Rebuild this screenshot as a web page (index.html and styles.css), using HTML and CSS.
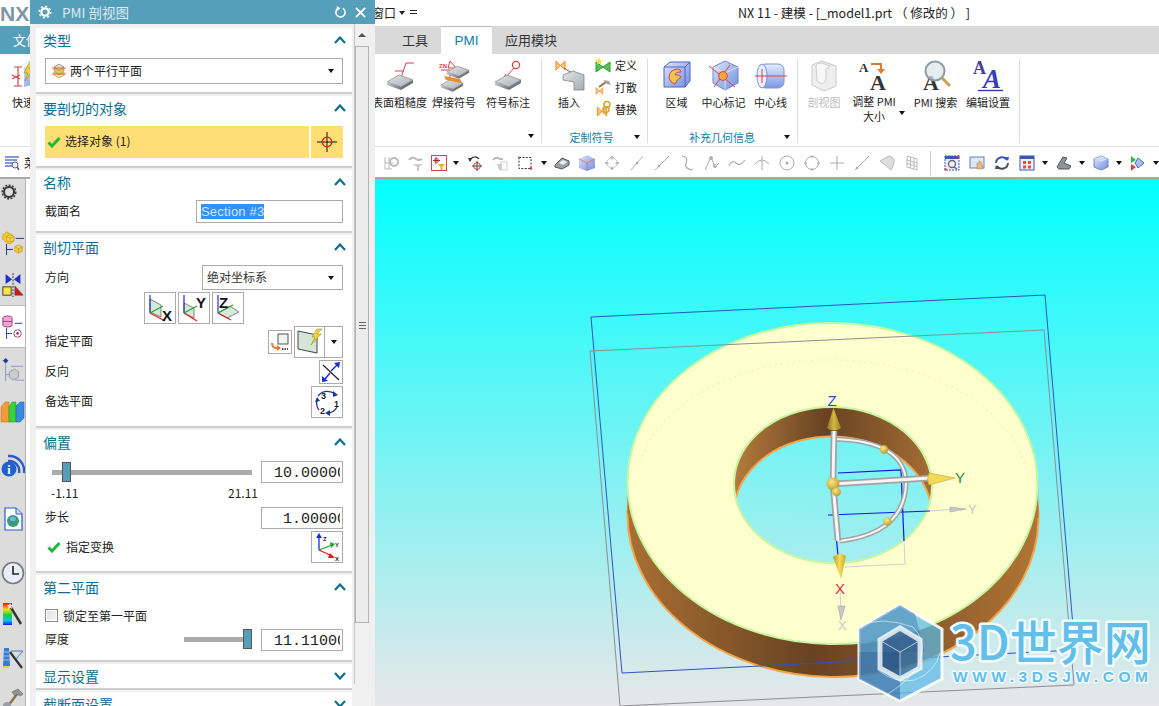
FILE: index.html
```html
<!DOCTYPE html>
<html lang="zh">
<head>
<meta charset="utf-8">
<title>NX 11 - 建模</title>
<link rel="stylesheet" href="styles.css">
</head>
<body>
<svg class="defs" aria-hidden="true">
  <defs>
    <linearGradient id="slab" x1="0" y1="0" x2="1" y2="1"><stop offset="0" stop-color="#e4e6e8"/><stop offset="1" stop-color="#a8adb2"/></linearGradient>
    <linearGradient id="slabside" x1="0" y1="0" x2="1" y2="0"><stop offset="0" stop-color="#c5c9cd"/><stop offset="1" stop-color="#70767c"/></linearGradient>
    <linearGradient id="cubeblue" x1="0" y1="0" x2="1" y2="1"><stop offset="0" stop-color="#dfe6fb"/><stop offset="1" stop-color="#6f8ee0"/></linearGradient>
    <linearGradient id="cyl" x1="0" y1="0" x2="0" y2="1"><stop offset="0" stop-color="#e6ecfd"/><stop offset="1" stop-color="#7b97e6"/></linearGradient>
    <linearGradient id="bgrad" gradientUnits="userSpaceOnUse" x1="0" y1="179" x2="0" y2="706"><stop offset="0" stop-color="#00ffff"/><stop offset="1" stop-color="#e7e7e9"/></linearGradient>
    <linearGradient id="wall" gradientUnits="userSpaceOnUse" x1="628" y1="0" x2="1038" y2="0"><stop offset="0" stop-color="#a96f33"/><stop offset=".46" stop-color="#684222"/><stop offset="1" stop-color="#b07435"/></linearGradient>
    <linearGradient id="wallin" gradientUnits="userSpaceOnUse" x1="733" y1="0" x2="932" y2="0"><stop offset="0" stop-color="#b57c3c"/><stop offset=".45" stop-color="#684222"/><stop offset="1" stop-color="#a56d35"/></linearGradient>
    <linearGradient id="cone" x1="0" y1="0" x2="1" y2="0"><stop offset="0" stop-color="#b89c2e"/><stop offset=".5" stop-color="#f6dc54"/><stop offset="1" stop-color="#c4a834"/></linearGradient>
    <linearGradient id="conedark" x1="0" y1="0" x2="1" y2="0"><stop offset="0" stop-color="#8c7426"/><stop offset=".5" stop-color="#d4b844"/><stop offset="1" stop-color="#96802c"/></linearGradient>
    <linearGradient id="rainbow" x1="0" y1="0" x2="0" y2="1"><stop offset="0" stop-color="#f01010"/><stop offset=".3" stop-color="#f0e010"/><stop offset=".55" stop-color="#10d040"/><stop offset=".8" stop-color="#10c0f0"/><stop offset="1" stop-color="#1020e0"/></linearGradient>
    <radialGradient id="ball" cx=".4" cy=".35" r=".7"><stop offset="0" stop-color="#ffe982"/><stop offset="1" stop-color="#b8952a"/></radialGradient>
    <clipPath id="holeclip"><ellipse cx="833" cy="485" rx="99" ry="78" transform="rotate(2 833 485)"/></clipPath>
    <symbol id="check" viewBox="0 0 14 12"><path d="M1.5 6.5 L5 10 L12.5 2" fill="none" stroke="#1fb83a" stroke-width="3"/></symbol>
    <symbol id="up" viewBox="0 0 12 8"><path d="M1 7 L6 1.5 L11 7" fill="none" stroke="#0d6f92" stroke-width="2.2"/></symbol>
    <symbol id="down" viewBox="0 0 12 8"><path d="M1 1 L6 6.5 L11 1" fill="none" stroke="#0d6f92" stroke-width="2.2"/></symbol>
    <symbol id="slabicon" viewBox="0 0 28 16"><path d="M1 8 L13 1 L27 6 L15 13 Z" fill="url(#slab)" stroke="#777" stroke-width=".6"/><path d="M1 8 L15 13 L15 16 L1 11 Z" fill="url(#slabside)"/><path d="M15 13 L27 6 L27 9 L15 16 Z" fill="#6f757b"/></symbol>
    <symbol id="bow" viewBox="0 0 12 12"><path d="M1 1 L11 11 L11 1 L1 11 Z" fill="#ffc27a" stroke="#f08a24"/></symbol>
  </defs>
</svg>

<div class="app">
  <header class="titlebar">
    <span class="nx">NX</span>
    <span class="qat">窗口</span>
    <span class="qat-caret"></span>
    <span class="qat-more"></span>
    <span class="apptitle">NX 11 - 建模 - [_model1.prt （ 修改的 ） ]</span>
  </header>

  <nav class="tabs">
    <span class="tab-file">文件</span>
    <span class="tab tab-tools">工具</span>
    <span class="tab tab-active">PMI</span>
    <span class="tab">应用模块</span>
  </nav>

  <section class="ribbon">
    <div class="rb-quick">
      <svg class="rb-icon" viewBox="0 0 32 32"><path d="M16 8 L30 4 L30 24 L16 28 Z" fill="url(#cubeblue)"/><path d="M22 2 L16 14 L20 14 L17 22 L26 10 L21 10 L25 2 Z" fill="#f2cf3a" stroke="#9a8420" stroke-width=".6"/><path d="M6 8 H14 M10 8 V27 M6 27 H14 M4 16 L12 20 M12 16 L4 20" stroke="#d8434a" stroke-width="1.2" fill="none"/></svg>
      <span class="rb-label">快速</span>
    </div>
    <div class="rb-group rb-g1">
      <div class="rb-items">
        <div class="rb-item"><svg class="rb-icon" viewBox="0 0 32 32"><path d="M12 16 L16 21 L22 3 H30" fill="none" stroke="#d8434a" stroke-width="1"/><path d="M11 11 H19" stroke="#d8434a"/><use href="#slabicon" x="2" y="14" width="28" height="16"/></svg><span class="rb-label">表面粗糙度</span></div>
        <div class="rb-item"><svg class="rb-icon" viewBox="0 0 32 32"><text x="1" y="8" class="ic-small">ZN</text><path d="M12 1 L18 8 H10 Z M3 10 H12 L12 19" fill="none" stroke="#d8434a"/><use href="#slabicon" x="8" y="5" width="24" height="14"/><use href="#slabicon" x="2" y="18" width="24" height="14"/><path d="M6 16 L22 19 L24 23 L8 20 Z" fill="#f08c2a"/></svg><span class="rb-label">焊接符号</span></div>
        <div class="rb-item"><svg class="rb-icon" viewBox="0 0 32 32"><circle cx="24" cy="5" r="3.6" fill="#fff" stroke="#d8434a" stroke-width="1.2"/><path d="M22 8 L14 17" stroke="#d8434a"/><path d="M12 19 L13 14 L17 17 Z" fill="#d8434a"/><use href="#slabicon" x="2" y="14" width="28" height="16"/></svg><span class="rb-label">符号标注</span></div>
      </div>
      <div class="rb-foot"><span class="rb-foot-label"></span><span class="caret"></span></div>
    </div>
    <div class="rb-group rb-g2">
      <div class="rb-items">
        <div class="rb-item rb-insert"><svg class="rb-icon" viewBox="0 0 32 32"><use href="#bow" x="1" y="0" width="13" height="11"/><path d="M11 8 L22 15" stroke="#d8434a"/><path d="M10 15 L20 11 L31 15 L31 30 L21 30 L21 22 L10 20 Z" fill="url(#slab)" stroke="#777" stroke-width=".7"/></svg><span class="rb-label">插入</span></div>
        <div class="rb-stack">
          <div class="rb-small"><svg class="i16" viewBox="0 0 16 16"><path d="M1 5 L15 15 L15 5 L1 15 Z" fill="#55c455" stroke="#2c9a3a"/><path d="M4 0 L5 3 L8 3 L5.5 5 L6.5 8 L4 6 L1.5 8 L2.5 5 L0 3 L3 3 Z" fill="#f2e04a"/></svg><span>定义</span></div>
          <div class="rb-small"><svg class="i16" viewBox="0 0 16 16"><use href="#bow" x="0" y="8" width="9" height="8"/><path d="M4 8 L11 3" stroke="#a86a2a" stroke-width="1.6"/><path d="M8 1 L14 2 L16 6 L12 5 Z" fill="#9aa0a6"/></svg><span>打散</span></div>
          <div class="rb-small"><svg class="i16" viewBox="0 0 16 16"><use href="#bow" x="0" y="5" width="14" height="11"/><circle cx="12" cy="3.5" r="3" fill="none" stroke="#d5a92a" stroke-width="1.6"/><circle cx="11" cy="8.5" r="3" fill="none" stroke="#d5a92a" stroke-width="1.6"/></svg><span>替换</span></div>
        </div>
      </div>
      <div class="rb-foot"><span class="rb-foot-label">定制符号</span><span class="caret"></span></div>
    </div>
    <div class="rb-group rb-g3">
      <div class="rb-items">
        <div class="rb-item rb-w47"><svg class="rb-icon" viewBox="0 0 32 32"><path d="M3 7 L9 2 L29 2 L29 21 L24 27 L3 27 Z" fill="url(#cubeblue)" stroke="#4a66b8"/><path d="M3 7 H24 V27 M24 7 L29 2" fill="none" stroke="#4a66b8"/><path d="M8 18 Q8 10 16 9 Q20 9 20 12 Q14 12 14 15 Q18 14 20 17 Q16 19 14 24 Q9 23 8 18 Z" fill="#f4c34e" stroke="#d8434a"/></svg><span class="rb-label">区域</span></div>
        <div class="rb-item rb-w47"><svg class="rb-icon" viewBox="0 0 32 32"><path d="M17 1 L30 7 L30 23 L17 30 L5 23 L5 7 Z" fill="url(#cubeblue)" stroke="#6a84c8"/><path d="M5 7 L17 13 L30 7 M17 13 V30" fill="none" stroke="#fff" stroke-width=".6"/><path d="M1 6 L27 27 M22 5 L6 27" stroke="#d8434a"/><circle cx="15" cy="16" r="4.4" fill="#f5a53a" stroke="#d8434a"/></svg><span class="rb-label">中心标记</span></div>
        <div class="rb-item rb-w47"><svg class="rb-icon" viewBox="0 0 32 32"><rect x="5" y="4" width="24" height="24" rx="6" fill="url(#cyl)" stroke="#7a93d8"/><ellipse cx="7" cy="16" rx="5" ry="12" fill="#e9eefc" stroke="#7a93d8"/><path d="M0 16 H32 M7 9 V23" stroke="#d8434a"/></svg><span class="rb-label">中心线</span></div>
      </div>
      <div class="rb-foot"><span class="rb-foot-label">补充几何信息</span><span class="caret"></span></div>
    </div>
    <div class="rb-group rb-g4">
      <div class="rb-items">
        <div class="rb-item rb-w50 rb-off"><svg class="rb-icon" viewBox="0 0 32 32"><path d="M4 5 L14 1 L28 6 L28 26 L16 31 L4 25 Z" fill="#eee" stroke="#c9c9c9"/><path d="M8 5 Q8 3 14 3 L22 6 L18 9 V18 Q18 22 14 24 L9 21 Z" fill="#f8f8f8" stroke="#cfcfcf"/></svg><span class="rb-label">剖视图</span></div>
        <div class="rb-item rb-w50 rb-wrap"><svg class="rb-icon" viewBox="0 0 32 32"><text x="1" y="12" class="ic-a-s">A</text><text x="12" y="30" class="ic-a-l">A</text><path d="M13 4 H23 V10" fill="none" stroke="#e8792a" stroke-width="2"/><path d="M19 9 H27 L23 14 Z" fill="#e8792a"/></svg><span class="rb-label">调整 PMI<br>大小</span><span class="caret caret-in"></span></div>
        <div class="rb-item rb-w55"><svg class="rb-icon" viewBox="0 0 32 32"><text x="3" y="30" class="ic-a-l">A</text><circle cx="15" cy="11" r="9.5" fill="#dfe6e8" fill-opacity=".75" stroke="#8d9aa0" stroke-width="2"/><path d="M22 18 L30 26" stroke="#c9a05a" stroke-width="3"/></svg><span class="rb-label">PMI 搜索</span></div>
        <div class="rb-item rb-w50"><svg class="rb-icon" viewBox="0 0 32 32"><text x="1" y="14" class="ic-a-p">A</text><text x="11" y="28" class="ic-a-i">A</text><path d="M6 30.5 H31" stroke="#3a3ab8" stroke-width="1.4"/></svg><span class="rb-label">编辑设置</span></div>
      </div>
      <div class="rb-foot"><span class="rb-foot-label"></span></div>
    </div>
  </section>

  <section class="toolbar">
    <div class="tb-left">
      <svg class="i16" viewBox="0 0 16 16"><path d="M1 2 H15 M1 5 H13 M1 8 H9 M1 11 H8" stroke="#5a7ac0" stroke-width="1.3"/><circle cx="11" cy="10" r="3" fill="#e8edf5" stroke="#666"/><path d="M13 12 L15 15" stroke="#666" stroke-width="1.5"/></svg>
      <span>菜单</span>
    </div>
    <svg class="tb-icon" viewBox="0 0 16 16"><path d="M2 2 V14 H9 M2 8 H10 M6 2 V14" fill="none" stroke="#bbb"/><circle cx="11" cy="7" r="4" fill="none" stroke="#bbb" stroke-width="2"/></svg>
    <svg class="tb-icon" viewBox="0 0 16 16"><path d="M1 5 Q4 1 8 4 Q11 6 14 4" fill="none" stroke="#bbb" stroke-width="2"/><path d="M5 9 H15 L11 12 V16 H9 V12 Z" fill="#ccc"/></svg>
    <span class="tb-n"><svg class="tb-box" viewBox="0 0 16 16"><rect x=".5" y=".5" width="15" height="15" fill="#fff" stroke="#d8434a"/><path d="M5 2 V9 M2 5.5 H9" stroke="#8a2a2a"/><circle cx="5.5" cy="5.5" r="2" fill="none" stroke="#d8434a"/><path d="M7 9 H14 L11.5 12 V15 H9.5 V12 Z" fill="#f2b02a"/></svg></span>
    <span class="caret-slot w14"><span class="caret"></span></span>
    <svg class="tb-icon" viewBox="0 0 16 16"><path d="M3 6 A5 5 0 0 1 12 4" fill="none" stroke="#333" stroke-width="1.2"/><path d="M1 3 L5 3 L3 7 Z" fill="#333"/><circle cx="10" cy="11" r="3.4" fill="none" stroke="#d8434a"/><path d="M10 6 V16 M5 11 H15" stroke="#222" stroke-width=".8"/></svg>
    <svg class="tb-icon" viewBox="0 0 16 16"><path d="M1 5 Q4 1 8 4 L11 4" fill="none" stroke="#bbb" stroke-width="2"/><rect x="9" y="7" width="6" height="8" fill="none" stroke="#ccc"/><path d="M5 9 H10 V15 H7 Z" fill="#ccc"/></svg>
    <svg class="tb-icon" viewBox="0 0 16 16"><rect x="2" y="2.5" width="12" height="11" fill="none" stroke="#333" stroke-dasharray="2 1.4"/><circle cx="14" cy="13.5" r="1.3" fill="#d8434a"/><circle cx="2" cy="2.5" r="1" fill="#d8434a"/></svg>
    <span class="caret-slot"><span class="caret"></span></span>
    <svg class="tb-icon" viewBox="0 0 16 16"><path d="M1 10 L8 3 L15 6 V10 L8 14 L1 12 Z" fill="#9ca1a6" stroke="#555"/><path d="M5 8 L9 5 L13 7 L9 10 Z" fill="#eee"/></svg>
    <svg class="tb-icon" viewBox="0 0 16 16"><path d="M8 0 L16 4 V13 L8 16 L0 13 V4 Z" fill="url(#cubeblue)"/><path d="M0 4 L8 8 L16 4 M8 8 V16" fill="none" stroke="#e4572e" stroke-width=".6"/></svg>
    <svg class="tb-icon" viewBox="0 0 16 16"><path d="M8 1 L15 8 L8 15 L1 8 Z" fill="none" stroke="#ccc"/><circle cx="8" cy="3" r="1.6" fill="#bbb"/><circle cx="13" cy="8" r="1.6" fill="#bbb"/><circle cx="8" cy="13" r="1.6" fill="#bbb"/><circle cx="3" cy="8" r="1.6" fill="#bbb"/></svg>
    <svg class="tb-icon" viewBox="0 0 16 16"><path d="M2 15 L14 1" stroke="#aaa"/><circle cx="8" cy="8" r="1.3" fill="#aaa"/></svg>
    <svg class="tb-icon" viewBox="0 0 16 16"><path d="M1 15 L15 1" stroke="#aaa"/><circle cx="5" cy="11" r="1.3" fill="#aaa"/></svg>
    <svg class="tb-icon" viewBox="0 0 16 16"><path d="M3 1 Q10 2 7 8 Q5 14 14 15" fill="none" stroke="#aaa" stroke-width="1.2"/></svg>
    <svg class="tb-icon" viewBox="0 0 16 16"><path d="M1 15 L7 2 L11 12 L15 8" fill="none" stroke="#aaa"/><circle cx="7" cy="3" r="1.5" fill="none" stroke="#aaa"/><circle cx="11" cy="11" r="1.5" fill="none" stroke="#aaa"/></svg>
    <svg class="tb-icon" viewBox="0 0 16 16"><path d="M0 11 Q3 4 7 8 T16 5" fill="none" stroke="#aaa" stroke-width="1.2"/></svg>
    <svg class="tb-icon" viewBox="0 0 16 16"><path d="M1 9 Q8 1 15 9 M8 1 V15" fill="none" stroke="#aaa"/></svg>
    <svg class="tb-icon" viewBox="0 0 16 16"><circle cx="8" cy="8" r="7" fill="none" stroke="#aaa"/><circle cx="8" cy="8" r="1.5" fill="#aaa"/></svg>
    <svg class="tb-icon" viewBox="0 0 16 16"><circle cx="8" cy="8" r="6.5" fill="none" stroke="#aaa"/><path d="M8 0 V3 M8 13 V16 M0 8 H3 M13 8 H16" stroke="#aaa"/></svg>
    <svg class="tb-icon" viewBox="0 0 16 16"><path d="M8 1 V15 M1 8 H15" stroke="#aaa"/></svg>
    <svg class="tb-icon" viewBox="0 0 16 16"><path d="M1 15 L15 1" stroke="#aaa"/><circle cx="3" cy="13" r="1.3" fill="#aaa"/></svg>
    <svg class="tb-icon" viewBox="0 0 16 16"><path d="M1 6 L10 1 Q16 2 15 8 L12 15 L5 9 Z" fill="#ddd" stroke="#bbb"/></svg>
    <svg class="tb-icon" viewBox="0 0 16 16"><path d="M3 1 L13 4 V15 L3 12 Z M3 5 L13 8 M3 8.5 L13 11.5 M6.5 2 V13 M10 3 V14" fill="none" stroke="#bbb"/></svg>
    <span class="tb-sep"></span>
    <svg class="tb-icon" viewBox="0 0 16 16"><rect x="1" y="1" width="14" height="14" fill="#e9eefc" stroke="#3a55b8" stroke-dasharray="2 1"/><rect x="1" y="1" width="14" height="3" fill="#3a55b8"/><circle cx="8" cy="9" r="3.5" fill="none" stroke="#666" stroke-width="1.3"/><path d="M10 12 L13 14" stroke="#666" stroke-width="1.5"/><circle cx="1.5" cy="14.5" r="1.2" fill="#d8434a"/><circle cx="14.5" cy="1.5" r="1.2" fill="#d8434a"/></svg>
    <svg class="tb-icon" viewBox="0 0 16 16"><rect x="1" y="2" width="14" height="11" fill="#e0e6f2" stroke="#6a7fb0"/><path d="M8 14 L8 8 L10 8 L10 6 L12 7 L13 9 L14 14 Z" fill="#e3b98a" stroke="#a5794a" stroke-width=".5"/></svg>
    <svg class="tb-icon" viewBox="0 0 16 16"><path d="M2 8 A6 6 0 0 1 13 5" fill="none" stroke="#3a55b8" stroke-width="2"/><path d="M14 8 A6 6 0 0 1 3 11" fill="none" stroke="#4a4a5a" stroke-width="2"/><path d="M11 2 L15 2 L14 6 Z" fill="#3a55b8"/><path d="M5 14 L1 14 L2 10 Z" fill="#4a4a5a"/></svg>
    <svg class="tb-icon" viewBox="0 0 16 16"><rect x="1" y="1" width="14" height="14" fill="#eef1fb" stroke="#3a55b8"/><rect x="1" y="1" width="14" height="3" fill="#3a55b8"/><rect x="4" y="6" width="3" height="3" fill="#e4572e"/><rect x="9" y="6" width="3" height="3" fill="#e4572e"/><rect x="4" y="10.5" width="3" height="3" fill="#e4572e"/><rect x="9" y="10.5" width="3" height="3" fill="#e4572e"/></svg>
    <span class="caret-slot"><span class="caret"></span></span>
    <svg class="tb-icon" viewBox="0 0 16 16"><path d="M1 12 L7 2 L11 3 L8 8 L15 11 L13 14 L3 14 Z" fill="#8f9499" stroke="#555"/></svg>
    <span class="caret-slot"><span class="caret"></span></span>
    <svg class="tb-icon" viewBox="0 0 16 16"><path d="M1 4 L8 1 L15 4 V12 L8 15 L1 12 Z" fill="url(#cubeblue)" stroke="#6a84c8"/><path d="M1 4 L8 7 L15 4 L8 1 Z" fill="#cfdaf7"/></svg>
    <span class="caret-slot"><span class="caret"></span></span>
    <svg class="tb-icon" viewBox="0 0 16 16"><path d="M8 3 L14 8 L8 13 L5 8 Z" fill="#a9bff0" stroke="#4a66b8"/><path d="M1 1 L6 5 L1 8 Z" fill="#2eb84a"/><path d="M1 9 L6 12 L1 16 Z" fill="#d8434a"/></svg>
    <span class="caret-slot"><span class="caret"></span></span>
  </section>

  <main class="workspace">
    <aside class="sidestrip">
      <div class="strip-cell strip-gear"><svg class="i16" viewBox="0 0 16 16"><circle cx="8" cy="8" r="5" fill="none" stroke="#333" stroke-width="2"/><circle cx="8" cy="8" r="6.8" fill="none" stroke="#333" stroke-width="1.4" stroke-dasharray="2 1.5"/></svg></div>
      <div class="strip-cell strip-asm"><svg class="i24" viewBox="0 0 24 26"><path d="M1 4 L5 1 L9 3 L13 6 V11 L9 14 L5 13 L1 9 Z" fill="#f7c92e" stroke="#b88a14" stroke-width=".6"/><path d="M5 6 L9 4 L13 6 V10 L9 12 L5 10 Z M5 6 L9 8 L13 6 M9 8 V12" fill="#fbdc5a" stroke="#b88a14" stroke-width=".6"/><path d="M14 17 L18 15 L22 17 V22 L18 24 L14 22 Z M14 17 L18 19 L22 17 M18 19 V24" fill="#f7c92e" stroke="#b88a14" stroke-width=".6"/><path d="M5 14 V26 M5 20 H12 M15 8 H24" fill="none" stroke="#14289a" stroke-width="1"/></svg></div>
      <div class="strip-cell strip-bow"><svg class="i24" viewBox="0 0 24 26"><path d="M4 1 L11 7 L4 12 Z M20 1 L13 7 L20 12 Z" fill="#1a2ed0"/><path d="M12 0 V26" stroke="#222" stroke-dasharray="2 1.5"/><rect x="1" y="15" width="9" height="9" fill="#f7e84a" stroke="#333"/><path d="M14 14 L23 24 H14 Z" fill="#d01a1a" stroke="#333" stroke-width=".5"/></svg></div>
      <div class="strip-active"><svg class="i24" viewBox="0 0 24 26"><path d="M1 3 Q1 1 6 1 Q11 1 11 3 V11 Q11 13 6 13 Q1 13 1 11 Z" fill="#e8a8d0" stroke="#a03a7a"/><path d="M1 7 H11" stroke="#a03a7a"/><path d="M14 9 H22 M5 14 V26 M5 20 H11" fill="none" stroke="#223a9a"/><circle cx="17" cy="20" r="4" fill="none" stroke="#a03a7a"/><circle cx="17" cy="20" r="1.5" fill="#a03a7a"/></svg></div>
      <div class="strip-cell strip-tree"><svg class="i24" viewBox="0 0 24 26"><path d="M4 0 L7 3 L4 6 L1 3 Z" fill="#223a9a"/><path d="M4 6 V25 M4 18 H8 M10 9 H23 M14 24 H24" fill="none" stroke="#8a90c8"/><path d="M8 15 L14 12 L18 15 V21 L12 24 L8 21 Z" fill="#c9ccd0" stroke="#999"/></svg></div>
      <div class="strip-cell strip-book"><svg class="i24" viewBox="0 0 24 24"><path d="M0 7 L4 2 H8 L8 22 H0 Z" fill="#f59a3a" stroke="#b5651a" stroke-width=".5"/><path d="M8 7 L11 2 H15 L15 22 H8 Z" fill="#3ad43a" stroke="#1a941a" stroke-width=".5"/><path d="M15 6 L19 2 H23 L23 18 L19 22 H15 Z" fill="#3a8ae0" stroke="#1a5aa8" stroke-width=".5"/></svg></div>
      <div class="strip-cell strip-info"><svg class="i24" viewBox="0 0 24 24"><path d="M7 3 A15 15 0 0 1 23 20 M7 8 A10 10 0 0 1 18 20" fill="none" stroke="#2a5ac8" stroke-width="2.4"/><circle cx="8" cy="16" r="7.5" fill="#1f5fd0"/><text x="8" y="20.5" class="ic-info">i</text></svg></div>
      <div class="strip-cell strip-doc"><svg class="i24" viewBox="0 0 20 24"><path d="M2 1 H13 L19 7 V23 H2 Z" fill="#fff" stroke="#2a5ac8" stroke-width="1.2"/><path d="M13 1 V7 H19" fill="#cfe0fb" stroke="#2a5ac8"/><circle cx="10" cy="14" r="6" fill="#3a9a7a"/><path d="M6 11 Q10 8 13 11 L12 14 L8 14 Z" fill="#6ab8e0"/></svg></div>
      <div class="strip-cell strip-clock"><svg class="i24" viewBox="0 0 24 24"><circle cx="12" cy="12" r="10.5" fill="#e8edf8" stroke="#777" stroke-width="1.6"/><path d="M12 5 V13 H18" fill="none" stroke="#222" stroke-width="1.6"/></svg></div>
      <div class="strip-cell strip-rain"><svg class="i24" viewBox="0 0 24 24"><rect x="2" y="0" width="9" height="22" fill="url(#rainbow)"/><path d="M9 3 L20 21" stroke="#333" stroke-width="2.4"/><path d="M9 0 L10 2 L12 2 L10.5 3.5 L11 6 L9 4.5 L7 6 L7.5 3.5 L6 2 L8 2 Z" fill="#fff"/></svg></div>
      <div class="strip-cell strip-wand"><svg class="i24" viewBox="0 0 24 24"><path d="M3 2 L8 2 L9 20 L2 20 Z" fill="#3a7ad0"/><path d="M2 6 H9 M2 10 H9 M2 14 H9" stroke="#9ac0f0"/><path d="M10 5 H22 L14 14" fill="none" stroke="#3a7ad0"/><path d="M9 6 L21 22" stroke="#333" stroke-width="2.2"/><path d="M2 21 H8" stroke="#f0d040" stroke-width="2"/></svg></div>
      <div class="strip-cell strip-ham"><svg class="i24" viewBox="0 0 24 24"><path d="M4 22 L16 6" stroke="#8a7040" stroke-width="2.4"/><path d="M11 4 L17 1 L22 6 L19 8 L16 6 L14 8 Z" fill="#8f9499" stroke="#555" stroke-width=".5"/><circle cx="6" cy="18" r="4" fill="#9aa0a6"/></svg></div>
    </aside>

    <svg class="viewport" viewBox="30 179 1129 527" preserveAspectRatio="none">
      <rect x="30" y="179" width="1129" height="527" fill="url(#bgrad)"/>

      <!-- solid: side wall -->
      <ellipse cx="833" cy="516" rx="205.5" ry="161" transform="rotate(1 833 516)" fill="url(#wall)" stroke="#f6a349" stroke-width="2"/>
      <polygon points="627.500,482 1038,486 1038.500,518 627.500,514" fill="url(#wall)"/>
      <!-- solid: top face -->
      <ellipse cx="832.500" cy="483.500" rx="205" ry="160.500" transform="rotate(1 832.500 483.500)" fill="#ffffcd" stroke="#c6f6a0" stroke-width="2"/>
      <path d="M640 462 A196 128 0 0 1 1026 470" class="face-dots"/>
      <!-- solid: hole -->
      <ellipse cx="833" cy="485" rx="99" ry="78" transform="rotate(2 833 485)" fill="url(#wallin)"/>
      <g clip-path="url(#holeclip)">
        <ellipse cx="833" cy="514.500" rx="99" ry="78" transform="rotate(2 833 514.500)" fill="url(#bgrad)" stroke="#f6a349" stroke-width="2"/>
      </g>
      <ellipse cx="833" cy="485" rx="99" ry="78" transform="rotate(2 833 485)" fill="none" stroke="#c6f6a0" stroke-width="2"/>

      <!-- section planes -->
      <polygon points="591,317 1045,295 1075,650 622,673" class="plane-blue"/>
      <polygon points="590,351 1044,330 1074,685 620,706" class="plane-gray"/>

      <!-- small section markers -->
      <path d="M838 473 L901 470 L904 541 M828 515 L930 511 M832 491 L838 556" class="mini-blue"/>
      <path d="M904 541 L905 564 L845 567 M930 511 L958 509 M840 590 L841 612" class="mini-gray"/>
      <path d="M950 507 L966 509 L950 512 Z M838 606 L841 620 L845 606 Z" fill="#c8c8cc" stroke="#999" stroke-width=".5"/>
      <text x="968" y="514" class="lbl lbl-gray">Y</text>
      <text x="838" y="630" class="lbl lbl-gray">X</text>

      <!-- manipulator -->
      <path d="M834 439 Q905 441 906 483 Q905 533 840 541" class="tube"/>
      <path d="M834 439 Q905 441 906 483 Q905 533 840 541" class="tube-hi"/>
      <path d="M834 431 L833 484 L838 541" class="tube tube-axis"/>
      <path d="M834 431 L833 484 L838 541" class="tube-hi tube-hi-axis"/>
      <path d="M833 484 L930 478" class="tube tube-axis"/>
      <path d="M833 484 L930 478" class="tube-hi tube-hi-axis"/>
      <path d="M833.500 408 L827 428 Q834 433 841 428 Z" fill="url(#conedark)"/>
      <path d="M955 478 L929 473 Q926 479 929 485 Z" fill="#f2da58" stroke="#b59a30" stroke-width=".5"/>
      <path d="M841 579 L833 557 Q840 551 846 556 Z" fill="url(#cone)"/>
      <circle cx="833" cy="484" r="6.500" fill="url(#ball)"/>
      <circle cx="836.500" cy="492" r="4.400" fill="url(#ball)"/>
      <circle cx="884" cy="449.500" r="4.200" fill="url(#ball)"/>
      <circle cx="887.500" cy="521.500" r="4.200" fill="url(#ball)"/>
      <text x="827.500" y="406" class="lbl lbl-z">Z</text>
      <text x="955" y="483" class="lbl lbl-y">Y</text>
      <text x="835" y="594" class="lbl lbl-x">X</text>

      <!-- watermark -->
      <g class="wm">
        <polygon points="900,605 942,629 942,679 900,701 859,679 859,629" class="wm-hex"/>
        <path d="M859 629 L900 605 L915 614 L925 652 L859 652 Z" fill="#4a85b8" fill-opacity=".55"/>
        <path d="M859 652 H900 V700 L859 679 Z" fill="#2d5f9a" fill-opacity=".55"/>
        <polygon points="900,628 920,640 920,668 900,679 880,668 880,640" fill="#1e4070" fill-opacity=".5"/>
        <polygon points="900,628 920,640 920,668 900,679 880,668 880,640" class="wm-inner"/>
        <path d="M881 641 L900 652 L919 641 M900 652 V678" class="wm-cube"/>
        <path d="M858 627 Q880 615 913 627 Q925 640 922 652 Q920 675 883 697 M878 670 Q895 684 915 680 Q935 672 940 653" class="wm-arc"/>
      </g>
      <text x="950" y="660" class="wm-title">3D世界网</text>
      <text x="953" y="682" class="wm-url" textLength="195" lengthAdjust="spacing">WWW.3DSJW.COM</text>
    </svg>
  </main>
</div>

<aside class="dialog">
  <div class="dlg-title">
    <svg class="dlg-gear" viewBox="0 0 16 16"><circle cx="8" cy="8" r="4.2" fill="none" stroke="#fff" stroke-width="2.6"/><circle cx="8" cy="8" r="6.6" fill="none" stroke="#fff" stroke-width="1.8" stroke-dasharray="2.3 2.8"/></svg>
    <span class="dlg-name">PMI 剖视图</span>
    <svg class="dlg-btn" viewBox="0 0 14 14"><path d="M9.5 2.5 A5 5 0 1 1 4 2.8" fill="none" stroke="#fff" stroke-width="1.7"/><path d="M3 0 L7 2.5 L3 5.5 Z" fill="#fff"/></svg>
    <svg class="dlg-btn" viewBox="0 0 14 14"><path d="M2 2 L12 12 M12 2 L2 12" stroke="#fff" stroke-width="2"/></svg>
  </div>
  <div class="dlg-body">
    <div class="dlg-panels">
      <section class="sec sec-h66">
        <h3 class="sec-head">类型<svg class="chev" viewBox="0 0 12 8"><use href="#up"/></svg></h3>
        <div class="combo combo-full">
          <svg class="i16" viewBox="0 0 16 16"><path d="M3 4 L8 1 L13 4 L8 7 Z" fill="#e8d9c0" stroke="#666" stroke-width=".6"/><path d="M3 5 V8 L8 11 L13 8 V5 L8 8 Z" fill="#f4c93a" stroke="#a5851a" stroke-width=".6"/><path d="M3 9 V12 L8 15 L13 12 V9 L8 12 Z" fill="#f2e7b0" stroke="#a5851a" stroke-width=".6"/><path d="M1 5 H15 M1 11 H15" stroke="#d8434a" stroke-width=".8"/></svg>
          <span class="combo-text">两个平行平面</span><span class="caret"></span>
        </div>
      </section>

      <section class="sec sec-h72">
        <h3 class="sec-head">要剖切的对象<svg class="chev" viewBox="0 0 12 8"><use href="#up"/></svg></h3>
        <div class="selrow">
          <div class="selmain"><svg class="chk" viewBox="0 0 14 12"><use href="#check"/></svg><span class="seltext">选择对象 (1)</span></div>
          <div class="selbtn"><svg class="i20" viewBox="0 0 20 20"><path d="M10 0 V20 M0 10 H20" stroke="#111" stroke-width="1"/><circle cx="10" cy="10" r="4.8" fill="none" stroke="#e8141c" stroke-width="1.3"/></svg></div>
        </div>
      </section>

      <section class="sec sec-h63">
        <h3 class="sec-head">名称<svg class="chev" viewBox="0 0 12 8"><use href="#up"/></svg></h3>
        <div class="row">
          <span class="lab">截面名</span>
          <div class="textbox"><span class="sel">Section #3</span></div>
        </div>
      </section>

      <section class="sec sec-h193">
        <h3 class="sec-head">剖切平面<svg class="chev" viewBox="0 0 12 8"><use href="#up"/></svg></h3>
        <div class="row row-25">
          <span class="lab">方向</span>
          <div class="combo combo-dir"><span class="combo-text">绝对坐标系</span><span class="caret"></span></div>
        </div>
        <div class="xyz">
          <button class="ib ib-32"><svg viewBox="0 0 30 30"><path d="M5 6 L16 12 V24 L5 19 Z" fill="#d5ead9" stroke="#555" stroke-width=".7"/><path d="M5 2 V20" stroke="#1a2ed0" stroke-width="1.2"/><path d="M5 20 L20 28" stroke="#e01c1c" stroke-width="1.2"/><path d="M5 20 L18 13" stroke="#1aa82a" stroke-width="1.2"/><text x="17" y="28" class="ic-axis">X</text></svg></button>
          <button class="ib ib-32"><svg viewBox="0 0 30 30"><path d="M5 10 L15 15 L15 25 L5 20 Z" fill="#d5ead9" stroke="#555" stroke-width=".7"/><path d="M5 2 V20" stroke="#1a2ed0" stroke-width="1.2"/><path d="M5 20 L18 28" stroke="#e01c1c" stroke-width="1.2"/><path d="M5 20 L18 13" stroke="#1aa82a" stroke-width="1.2"/><text x="17" y="15" class="ic-axis">Y</text></svg></button>
          <button class="ib ib-32"><svg viewBox="0 0 30 30"><path d="M5 20 L17 13 L26 19 L14 25 Z" fill="#d5ead9" stroke="#555" stroke-width=".7"/><path d="M5 2 V20" stroke="#1a2ed0" stroke-width="1.2"/><path d="M5 20 L18 27" stroke="#e01c1c" stroke-width="1.2"/><path d="M5 20 L20 12" stroke="#1aa82a" stroke-width="1.2"/><text x="6" y="15" class="ic-axis">Z</text></svg></button>
        </div>
        <div class="row row-32">
          <span class="lab">指定平面</span>
          <button class="ib ib-24"><svg viewBox="0 0 22 22"><rect x="9" y="3" width="10" height="10" fill="#eef4ee" stroke="#555"/><path d="M3 12 Q3 18 10 17" fill="none" stroke="#e8792a" stroke-width="2"/><path d="M8 14 L12 17 L8 20 Z" fill="#e8792a"/><path d="M13 18 H19" stroke="#222" stroke-width="1.6" stroke-dasharray="1.5 1"/></svg></button>
          <div class="splitbtn">
            <span class="split-main"><svg class="i28" viewBox="0 0 28 28"><path d="M2 3 L21 7 V25 L2 21 Z" fill="#d5e6d8" stroke="#444"/><path d="M21 1 L16 9 L19 9 L15 17 L25 6 L21 6 L26 1 Z" fill="#f2d43a" stroke="#8a7a20" stroke-width=".5"/></svg></span>
            <span class="split-drop"><span class="caret"></span></span>
          </div>
        </div>
        <div class="row row-24">
          <span class="lab">反向</span>
          <button class="ib ib-24"><svg viewBox="0 0 22 22"><path d="M3 4 L19 19" stroke="#222" stroke-width="1.2"/><path d="M11 10 L18 3" stroke="#1a2ed0" stroke-width="1.4"/><path d="M14 2 L20 1 L19 7 Z" fill="#1a2ed0"/><path d="M10 12 L5 18" stroke="#1a2ed0" stroke-width="1.4"/><path d="M2 15 L2 21 L8 20 Z" fill="#1a2ed0"/></svg></button>
        </div>
        <div class="row row-32">
          <span class="lab">备选平面</span>
          <button class="ib ib-32"><svg viewBox="0 0 30 30"><path d="M6 9 A12 12 0 0 1 23 7 M25 20 A12 12 0 0 1 17 26 M7 23 A12 12 0 0 1 5 13" fill="none" stroke="#1f3a8c" stroke-width="1.3"/><path d="M21 4 L26 8 L21 10 Z M18 23 L18 29 L13 26 Z M3 15 L8 14 L5 10 Z" fill="#1f3a8c"/><text x="9" y="12" class="ic-num">3</text><text x="22" y="20" class="ic-num">1</text><text x="8" y="27" class="ic-num">2</text></svg></button>
        </div>
      </section>

      <section class="sec sec-h143">
        <h3 class="sec-head">偏置<svg class="chev" viewBox="0 0 12 8"><use href="#up"/></svg></h3>
        <div class="row row-22 row-offset">
          <div class="slider slider-offset"><span class="thumb"></span></div>
          <div class="numbox"><span class="numclip"><span class="numval">10.00000</span></span></div>
        </div>
        <div class="scale"><span>-1.11</span><span>21.11</span></div>
        <div class="row row-23">
          <span class="lab">步长</span>
          <div class="numbox"><span class="numclip"><span class="numval">1.00000</span></span></div>
        </div>
        <div class="row row-32">
          <span class="lab lab-check"><svg class="chk" viewBox="0 0 14 12"><use href="#check"/></svg>指定变换</span>
          <button class="ib ib-32"><svg viewBox="0 0 30 30"><path d="M7 18 V5" stroke="#1a2ed0" stroke-width="1.3"/><path d="M4 6 L7 1 L10 6 Z" fill="#1a2ed0"/><path d="M7 18 L20 13" stroke="#1aa82a" stroke-width="1.3"/><path d="M18 10 L23 12 L19 16 Z" fill="#1aa82a"/><path d="M7 18 L20 24" stroke="#e01c1c" stroke-width="1.3"/><path d="M18 21 L23 26 L16 26 Z" fill="#e01c1c"/><text x="11" y="9" class="ic-tiny">Z</text><text x="23" y="15" class="ic-tiny">Y</text><text x="23" y="29" class="ic-tiny">X</text></svg></button>
        </div>
      </section>

      <section class="sec sec-h87">
        <h3 class="sec-head">第二平面<svg class="chev" viewBox="0 0 12 8"><use href="#up"/></svg></h3>
        <label class="checkrow"><span class="checkbox"></span>锁定至第一平面</label>
        <div class="row row-23">
          <span class="lab">厚度</span>
          <div class="slider slider-thick"><span class="thumb"></span></div>
          <div class="numbox"><span class="numclip"><span class="numval">11.11000</span></span></div>
        </div>
      </section>

      <section class="sec sec-h26">
        <h3 class="sec-head sec-head-c">显示设置<svg class="chev" viewBox="0 0 12 8"><use href="#down"/></svg></h3>
      </section>
      <section class="sec sec-last">
        <h3 class="sec-head sec-head-c">截断面设置<svg class="chev" viewBox="0 0 12 8"><use href="#down"/></svg></h3>
      </section>
    </div>

    <div class="scroll">
      <span class="scroll-up"></span>
      <span class="scroll-thumb"><span class="grip"></span></span>
    </div>
  </div>
</aside>
</body>
</html>
```

FILE: styles.css
```css
* { box-sizing: border-box; }
html, body { margin: 0; padding: 0; height: 100%; overflow: hidden; }
body {
  width: 1159px;
  height: 706px;
  position: relative;
  background: #fff;
  color: #222;
  font: 12px "Noto Sans CJK SC", "Liberation Sans", sans-serif;
}
.defs { display: block; width: 0; height: 0; }
svg { display: block; flex: none; overflow: visible; }
.i16 { width: 16px; height: 16px; }
.i20 { width: 20px; height: 20px; }
.i24 { width: 24px; height: 24px; }
.i28 { width: 28px; height: 28px; }

.app { display: flex; flex-direction: column; width: 1159px; height: 706px; }

/* caret shared */
.caret {
  display: inline-block;
  width: 0; height: 0;
  border-left: 3.5px solid transparent;
  border-right: 3.5px solid transparent;
  border-top: 4px solid #111;
  flex: none;
}

/* title bar */
.titlebar { flex: 0 0 26px; min-height: 0; display: flex; align-items: center; background: #fff; overflow: hidden; }
.nx { flex: 0 0 372px; font: bold 21px/26px "Liberation Sans", sans-serif; color: #7d96a8; padding-top: 2px; }
.qat { font-size: 12px; line-height: 26px; }
.qat-caret { width: 0; height: 0; margin-left: 3px; border-left: 3px solid transparent; border-right: 3px solid transparent; border-top: 4px solid #222; }
.qat-more { width: 7px; height: 6px; margin-left: 5px; border-top: 1px solid #222; background: linear-gradient(#222,#222) center 2px/7px 1px no-repeat; }
.apptitle { margin-left: 321px; font-size: 12.5px; line-height: 26px; color: #222; white-space: pre; }

/* tabs */
.tabs { flex: 0 0 28px; min-height: 0; display: flex; align-items: stretch; background: #d9d9d9; }
.tab-file { flex: 0 0 388px; background: linear-gradient(90deg, #569fba 0, #569fba 30px, transparent 30px); color: #fff; font-size: 13px; line-height: 28px; padding-left: 13px; }
.tab { padding: 0 13px; font-size: 13px; line-height: 27px; color: #333; }
.tab-tools { padding-left: 14px; }
.tab-active { width: 51px; padding: 0; text-align: center; background: #fff; color: #0f7ea8; border-top: 1px solid #bbb; font-family: "Liberation Sans", sans-serif; font-size: 13.5px; }

/* ribbon */
.ribbon { flex: 0 0 93px; min-height: 0; display: flex; background: #fff; padding-top: 5px; border-bottom: 1px solid #ddd; }
.rb-icon { width: 32px; height: 32px; }
.rb-label { display: block; margin-top: 2px; font-size: 11px; line-height: 16px; text-align: center; white-space: nowrap; color: #222; }
.rb-quick { flex: 0 0 372px; padding: 0 0 0 8px; overflow: hidden; }
.rb-quick .rb-label { text-align: left; padding-left: 4px; margin-top: 3px; }
.rb-group { display: flex; flex-direction: column; border-right: 1px solid #ddd; height: 84px; }
.rb-g1 { flex: 0 0 170px; }
.rb-g2 { flex: 0 0 106px; }
.rb-g3 { flex: 0 0 150px; padding-left: 5px; }
.rb-g4 { flex: 0 0 222px; padding-left: 1px; }
.rb-items { flex: 0 0 66px; display: flex; padding-top: 1px; }
.rb-item { position: relative; flex: 0 0 54px; display: flex; flex-direction: column; align-items: center; }
.rb-w47 { flex-basis: 47px; }
.rb-w50 { flex-basis: 50px; }
.rb-w55 { flex-basis: 55px; margin-left: 9px; }
.rb-wrap .rb-label { line-height: 15px; }
.rb-off .rb-label { color: #bbb; }
.caret-in { position: absolute; right: -6px; top: 51px; }
.rb-insert { flex: 0 0 56px; margin-left: -1px; }
.rb-stack { display: flex; flex-direction: column; gap: 6px; margin-top: -3px; margin-left: -2px; }
.rb-small { display: flex; align-items: center; gap: 4px; height: 16px; font-size: 11px; white-space: nowrap; }
.rb-foot { flex: 1; display: flex; align-items: center; padding-right: 7px; padding-top: 4px; }
.rb-foot-label { flex: 1; text-align: center; font-size: 11px; color: #0f7ea8; padding-left: 7px; }

.ic-small { font: bold 6px "Liberation Sans", sans-serif; fill: #d8434a; }
.ic-a-s { font: bold 13px "Liberation Serif", serif; fill: #333; }
.ic-a-l { font: bold 22px "Liberation Serif", serif; fill: #333; }
.ic-a-p { font: bold 18px "Liberation Serif", serif; fill: #4a3c90; }
.ic-a-i { font: italic bold 27px "Liberation Serif", serif; fill: #3a3ab8; }
.ic-info { font: bold 12px "Liberation Serif", serif; fill: #fff; text-anchor: middle; }
.ic-axis { font: bold 15px "Liberation Sans", sans-serif; fill: #111; }
.ic-num { font: bold 9px "Liberation Sans", sans-serif; fill: #222; }
.ic-tiny { font: bold 6px "Liberation Sans", sans-serif; fill: #222; }

/* toolbar */
.toolbar { flex: 0 0 32px; min-height: 0; display: flex; align-items: center; background: #fff; border-bottom: 2px solid #a9a9a9; padding-top: 1px; overflow: hidden; }
.tb-left { flex: 0 0 378.5px; display: flex; align-items: center; gap: 4px; padding-left: 4px; font-size: 12px; overflow: hidden; }
.tb-icon { width: 16px; height: 16px; margin: 0 4.5px; }
.tb-n { flex: 0 0 20px; display: flex; justify-content: center; }
.tb-box { width: 16px; height: 16px; }
.caret-slot { flex: 0 0 12px; display: flex; justify-content: center; }
.caret-slot.w14 { flex-basis: 14px; }
.tb-sep { flex: 0 0 1px; height: 24px; margin: 0 8px 0 5.5px; background: #ccc; }

/* workspace */
.workspace { flex: 1; min-height: 0; display: flex; background: #fff; }
.sidestrip { flex: 0 0 26px; margin-right: 4px; display: flex; flex-direction: column; background: #dcdcdc; border-right: 1px solid #b5b5b5; overflow: hidden; }
.strip-cell { display: flex; justify-content: center; align-items: center; flex: none; height: 24px; }
.strip-gear { height: 26px; justify-content: flex-start; padding-left: 1px; }
.strip-asm { margin-top: 26px; }
.strip-bow { margin-top: 18px; margin-bottom: 8px; }
.strip-active { flex: none; height: 43px; display: flex; align-items: center; justify-content: center; background: #fff; border-top: 1px solid #bbb; border-bottom: 1px solid #bbb; }
.strip-tree { margin-top: 10px; }
.strip-book { margin-top: 18px; }
.strip-info { margin-top: 29px; }
.strip-doc { margin-top: 30px; }
.strip-clock { margin-top: 30px; }
.strip-rain { margin-top: 18px; }
.strip-wand { margin-top: 19px; }
.strip-ham { margin-top: 18px; }
.viewport { flex: 1; height: 527px; overflow: hidden; }

.plane-blue { fill: none; stroke: #2f52c4; stroke-width: 1; }
.plane-gray { fill: none; stroke: #8d8d92; stroke-width: 1; }
.mini-blue { fill: none; stroke: #1414e6; stroke-width: 1.2; }
.mini-gray { fill: none; stroke: #cfcfd2; stroke-width: 1; }
.face-dots { fill: none; stroke: #f6cfa0; stroke-width: 1; stroke-dasharray: 1 5; }
.tube { fill: none; stroke: #a2a2a2; stroke-width: 5; }
.tube-axis { stroke-width: 6.5; }
.tube-hi { fill: none; stroke: #f6f6f6; stroke-width: 2; }
.tube-hi-axis { stroke-width: 3; }
.lbl { font: 15px "Liberation Sans", sans-serif; }
.lbl-z { fill: #1b4de0; }
.lbl-y { fill: #1d8f38; }
.lbl-x { fill: #d8343a; }
.lbl-gray { fill: #c6c8cc; font-size: 13px; }
.wm-hex { fill: #5ab9e6; fill-opacity: .72; stroke: #fff; stroke-width: 3; stroke-linejoin: round; stroke-opacity: .9; }
.wm-inner { fill: none; stroke: #fff; stroke-width: 5; stroke-opacity: .78; }
.wm-cube { fill: none; stroke: #e8eef4; stroke-width: 1; stroke-opacity: .7; }
.wm-arc { fill: none; stroke: #fff; stroke-width: 1; stroke-opacity: .55; }
.wm-title { font: 500 47px "Noto Sans CJK SC", sans-serif; fill: #62bfea; stroke: #f2fbff; stroke-width: 5px; paint-order: stroke; stroke-linejoin: round; }
.wm-url { font: 700 15.5px "Liberation Sans", sans-serif; fill: #62bfea; stroke: #f2fbff; stroke-width: 3px; paint-order: stroke; stroke-linejoin: round; }

/* dialog: floats over the application window */
.dialog {
  position: absolute; left: 30px; top: 0;
  width: 345px; height: 706px;
  display: flex; flex-direction: column;
  background: #f0f0f0;
  overflow: hidden;
}
.dlg-title { flex: 0 0 24px; display: flex; align-items: center; background: #569fba; padding: 0 8px; }
.dlg-gear { width: 14px; height: 14px; }
.dlg-name { flex: 1; margin-left: 10px; font-size: 13.5px; line-height: 24px; color: #dcebf0; }
.dlg-btn { width: 13px; height: 13px; margin-left: 7px; }
.dlg-body { flex: 1; min-height: 0; display: flex; padding: 4px 0 0 6px; }
.dlg-panels { flex: 0 0 316px; display: flex; flex-direction: column; gap: 2px; overflow: hidden; }

.sec { flex: none; background: #fff; border-bottom: 2px solid #cfcfcf; padding: 0 9px; }
.sec-h66 { height: 66px; }
.sec-h72 { height: 72px; }
.sec-h63 { height: 63px; }
.sec-h193 { height: 193px; }
.sec-h143 { height: 143px; }
.sec-h87 { height: 87px; }
.sec-h26 { height: 26px; }
.sec-last { height: 40px; border-bottom: 0; }
.sec-head {
  display: flex; align-items: center; justify-content: space-between;
  height: 26px; margin: 0 0 4px -2px; padding-bottom: 2px;
  font-size: 14px; font-weight: 400; color: #0c6f92;
}
.sec-head-c { height: 24px; margin-bottom: 0; padding-bottom: 0; }
.chev { width: 12px; height: 8px; margin-right: -3px; }

.lab { flex: 1; font-size: 12px; line-height: 16px; padding-bottom: 2px; }
.lab-check { display: flex; align-items: center; gap: 5px; padding-left: 2px; padding-bottom: 0; }
.chk { width: 14px; height: 12px; }

.combo { display: flex; align-items: center; height: 26px; border: 1px solid #ababab; padding: 0 8px 0 5px; background: #fff; }
.combo-full { width: 298px; }
.combo-dir { width: 141px; height: 25px; padding-left: 4px; }
.combo-text { flex: 1; padding: 0 0 2px 3px; font-size: 12px; }
.combo-dir .combo-text { padding-left: 0; font-size: 12px; color: #333; }

.selrow { display: flex; gap: 2px; height: 32px; background: #fff; }
.selmain { flex: 0 0 264px; display: flex; align-items: center; gap: 4px; padding-left: 2px; background: #ffdf74; font-size: 12px; }
.seltext { padding-bottom: 3px; }
.selbtn { flex: 0 0 32px; display: flex; align-items: center; justify-content: center; background: #ffdf74; }

.row { display: flex; align-items: center; gap: 2px; }
.row-22 { height: 22px; }
.row-23 { height: 23px; }
.row-24 { height: 24px; margin-top: 2px; }
.row-25 { height: 25px; }
.row-32 { height: 32px; margin-top: 2px; }
.textbox { flex: 0 0 147px; height: 23px; border: 1px solid #ababab; padding-left: 4px; display: flex; align-items: center; background: #fff; }
.sel { background: #3390ff; color: #cfe6ff; font: 13px/15px "Liberation Sans", sans-serif; letter-spacing: .2px; }

.xyz { display: flex; gap: 2px; padding-left: 99px; margin-top: 2px; height: 32px; }
.ib { flex: none; padding: 0; display: flex; align-items: center; justify-content: center; border: 1px solid #ababab; background: #fff; }
.ib svg { width: 100%; height: 100%; }
.ib-32 { width: 32px; height: 32px; }
.ib-24 { width: 24px; height: 24px; }
.splitbtn { flex: 0 0 49px; height: 32px; display: flex; border: 1px solid #ababab; }
.split-main { flex: 1; display: flex; align-items: center; justify-content: center; border-right: 1px solid #ababab; }
.split-drop { flex: 0 0 17px; display: flex; align-items: center; justify-content: center; }

.row-offset { margin-top: 5px; gap: 9px; }
.slider { position: relative; height: 5px; background: #ababab; }
.slider-offset { flex: 0 0 200px; margin-left: 7px; }
.slider-thick { flex: 0 0 68px; margin-right: 7px; }
.thumb { position: absolute; top: -8px; width: 9px; height: 20px; background: #569fba; border: 1px solid #555; }
.slider-offset .thumb { left: 10px; }
.slider-thick .thumb { right: 0; }
.numbox {
  flex: 0 0 82px; height: 22px; margin-left: auto;
  display: flex; padding-right: 2px;
  border: 1px solid #ababab; background: #fff;
}
.numclip { flex: 1; display: flex; justify-content: flex-end; overflow: hidden; }
.numval { flex: none; margin-right: -6px; font: 15px/23px "Liberation Mono", monospace; color: #222; white-space: nowrap; }
.scale { display: flex; justify-content: space-between; width: 213px; height: 23px; padding: 2px 0 0 6px; line-height: 16px; font-size: 12px; }

.checkrow { display: flex; align-items: center; gap: 5px; height: 18px; margin-top: 5px; margin-bottom: 4px; font-size: 12px; }
.checkbox { width: 13px; height: 13px; border: 1px solid #8a8a8a; background: linear-gradient(135deg, #dedede, #f8f8f8); box-shadow: inset 0 0 0 1px #fff; }

.scroll { flex: 0 0 14px; position: relative; margin-left: 2px; height: 660px; margin-top: -4px; border-left: 1px solid #c5c5c5; }
.scroll-up { display: block; width: 0; height: 0; margin: 9px auto 0; border-left: 4px solid transparent; border-right: 4px solid transparent; border-bottom: 4px solid #555; }
.scroll-thumb { position: absolute; left: 0; right: -1px; top: 22px; height: 577px; background: #ececec; border: 1px solid #b2b2b2; display: flex; align-items: center; justify-content: center; }
.grip { width: 7px; height: 7px; margin-top: -18px; border-top: 1px solid #666; border-bottom: 1px solid #666; background: linear-gradient(#666,#666) center/7px 1px no-repeat; }
```
